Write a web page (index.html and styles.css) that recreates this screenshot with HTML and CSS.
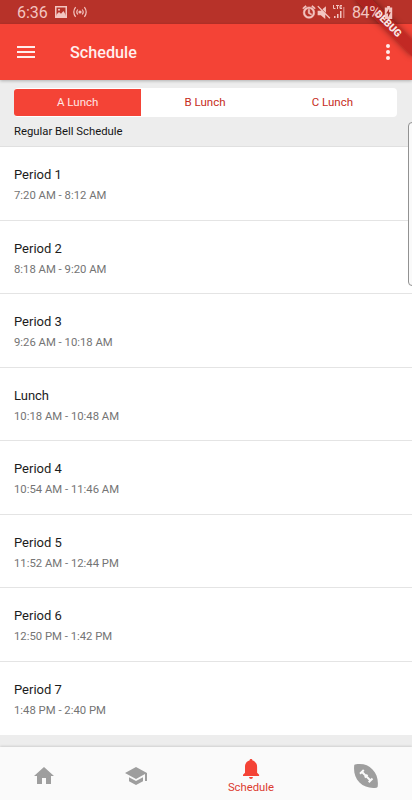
FILE: index.html
```html
<!DOCTYPE html>
<html lang="en">
<head>
    <meta charset="UTF-8" />
    <meta name="viewport" content="width=device-width, initial-scale=1" />
    <title>Schedule</title>
    <link rel="stylesheet" href="styles.css">
</head>
<body>

<div class="status-bar">
    <span class="clock">6:36</span>
    <svg class="icon-image" width="14" height="14" viewBox="0 0 14 14"><path fill-rule="evenodd" d="M1 1h12v12H1zM2.5 2.5v8h9v-8z"/><path d="M2.5 9.5 5 7l2 1.8L9.5 6l2 3.5v1.5h-9z"/><circle cx="5" cy="4.8" r="1"/></svg>
    <svg class="icon-cast" width="14" height="12" viewBox="0 0 14 12" fill="none" stroke="#f3c5c1" stroke-width="1.2"><circle cx="7" cy="6" r="1" fill="#f3c5c1"/><path d="M4.8 3.5q-2 2.5 0 5M9.2 3.5q2 2.5 0 5M2.6 1.2q-3.6 4.8 0 9.6M11.4 1.2q3.6 4.8 0 9.6"/></svg>
    <div class="status-right">
        <svg width="14" height="14" viewBox="1 1 22 22" stroke="#f3c5c1" stroke-width=".8"><path fill-rule="evenodd" d="M22 5.7l-4.6-3.9-1.3 1.5 4.6 3.9zM7.9 3.4 6.6 1.9 2 5.7l1.3 1.5zM12 4a9 9 0 1 0 0 18 9 9 0 0 0 0-18zm0 15.5a6.5 6.5 0 1 1 0-13 6.5 6.5 0 0 1 0 13z"/><path d="M13 8h-2.200v6l4.500 2.700 1-1.700-3.300-2z"/></svg>
        <svg width="14" height="14" viewBox="1 0 22 22"><path d="M3 1 1.500 2.500 8 9H2v7h5l7 6v-7l6.500 6.500L22 20zM15 2 9.500 6.500 15 12z"/></svg>
        <svg width="14" height="16" viewBox="0 0 14 16"><path fill="none" stroke="#f3c5c1" d="M1.500 1v3.500h2M4 1.500h3M5.500 1.500V5M10 1.500H8v3h2M8 3h2"/><path d="M2 12h1.500v2H2zM5 10h1.500v4H5zM8 7h1.500v7H8z"/><path opacity=".5" d="M11 3h1.500v11H11z"/></svg>
        <span class="battery-level">84%</span>
        <svg width="9" height="13" viewBox="0 0 9 14"><path fill-rule="evenodd" d="M3 0h3v1.500h2.500V14h-8V1.500H3zM5.200 3 2 8h2v4l3-5.200H5z"/></svg>
    </div>
</div>

<header class="app-bar">
    <svg class="menu-icon" width="18" height="14" viewBox="0 0 18 14"><path d="M0 1h18v2H0zM0 6h18v2H0zM0 11h18v2H0z"/></svg>
    <h1>Schedule</h1>
    <svg class="more-icon" width="4" height="16" viewBox="0 0 4 16"><circle cx="2" cy="2" r="2"/><circle cx="2" cy="8" r="2"/><circle cx="2" cy="14" r="2"/></svg>
</header>

<div class="lunch-header">
    <div class="tabs">
        <div class="tab active">A Lunch</div>
        <div class="tab">B Lunch</div>
        <div class="tab">C Lunch</div>
    </div>
    <p>Regular Bell Schedule</p>
</div>

<main class="periods">
    <div class="period"><h2>Period 1</h2><p>7:20 AM - 8:12 AM</p></div>
    <div class="period"><h2>Period 2</h2><p>8:18 AM - 9:20 AM</p></div>
    <div class="period"><h2>Period 3</h2><p>9:26 AM - 10:18 AM</p></div>
    <div class="period"><h2>Lunch</h2><p>10:18 AM - 10:48 AM</p></div>
    <div class="period"><h2>Period 4</h2><p>10:54 AM - 11:46 AM</p></div>
    <div class="period"><h2>Period 5</h2><p>11:52 AM - 12:44 PM</p></div>
    <div class="period"><h2>Period 6</h2><p>12:50 PM - 1:42 PM</p></div>
    <div class="period"><h2>Period 7</h2><p>1:48 PM - 2:40 PM</p></div>
</main>

<nav class="bottom-nav">
    <div class="nav-item home">
        <svg width="24" height="24" viewBox="0 0 24 24"><path d="M10 20v-6h4v6h5v-8h3L12 3 2 12h3v8z"/></svg>
    </div>
    <div class="nav-item">
        <svg width="24" height="24" viewBox="0 0 24 24"><path d="M5 13.180v4L12 21l7-3.820v-4L12 17zM12 3 1 9l11 6 9-4.910V17h2V9z"/></svg>
    </div>
    <div class="nav-item active">
        <svg width="18" height="20" viewBox="0 0 18 20"><path d="M9 0c1 0 1.500.7 1.500 1.600 2.900.7 4.600 3.100 4.600 6.100v6l2 2V17H1v-1.300l2-2v-6c0-3 1.600-5.400 4.500-6.100C7.500.7 8 0 9 0zM7 18h4q-.3 2-2 2t-2-2z"/></svg>
        <span>Schedule</span>
    </div>
    <div class="nav-item">
        <svg width="24" height="24" viewBox="0 0 24 24"><path d="M1 .5C8-.8 14 .5 18.500 5.500 23 10 24.500 16 23.700 22.500Q23.600 23.500 22.500 23.700C16 24.500 10 23 5.500 18.500 1 14-.5 8 .2 1.500Q.3.600 1 .5z"/><path class="laces" d="M8 8l8.500 8.500M6 9.800 9.800 6M14.700 18.300l3.800-3.800M10.800 13.500l2.700-2.700"/></svg>
    </div>
</nav>

<!-- edge panel handle -->
<div class="edge-handle"></div>

<div class="debug-corner">
    <div class="debug-banner">DEBUG</div>
</div>

</body>
</html>
```

FILE: styles.css
```css
* {
    box-sizing: border-box;
}
body {
    position: relative;
    display: flex;
    flex-direction: column;
    width: 412px;
    height: 800px;
    margin: 0;
    overflow: hidden;
    background-color: #ededed;
    font-family: Roboto, sans-serif;
}
h1, h2, p {
    margin: 0;
    font-weight: 400;
}
svg {
    display: block;
    flex-shrink: 0;
}
.status-bar {
    display: flex;
    align-items: center;
    height: 24px;
    padding: 0 19px 0 17px;
    background-color: #b73229;
    color: #f3c5c1;
    fill: #f3c5c1;
    font-size: 16px;
    line-height: 24px;
}
.clock {
    width: 37px;
    padding-top: 2px;
}
.icon-cast {
    margin-left: 5px;
}
/* system icons stay above the debug banner */
.status-right {
    display: flex;
    align-items: center;
    margin-left: auto;
    gap: 1px;
    z-index: 3;
}
.battery-level {
    width: 31px;
    margin-left: 5px;
    padding-top: 2px;
    letter-spacing: -0.4px;
}
.app-bar {
    display: flex;
    align-items: center;
    height: 56px;
    padding: 0 22px 0 17px;
    background-color: #f44336;
    color: #ffeeed;
    fill: #ffeeed;
    box-shadow: 0 1px 3px rgba(0,0,0,0.25);
    z-index: 1;
}
.app-bar h1 {
    margin-left: 35px;
    font-size: 16.2px;
    font-weight: 500;
}
.more-icon {
    margin-left: auto;
}
.lunch-header {
    height: 67px;
    padding: 8px 15px 0 14px;
    border-bottom: 1px solid #e0e0e0;
}
.tabs {
    display: flex;
    height: 29px;
    padding: 1px 1px 1px 0;
    background-color: white;
    border-radius: 4px;
}
.tab {
    flex: 1;
    color: #c62c22;
    font-size: 11.5px;
    line-height: 27px;
    text-align: center;
}
.tab.active {
    background-color: #f44336;
    border-radius: 3px 0 0 3px;
    color: #ffe6e4;
}
.lunch-header p {
    margin-top: 7px;
    color: #151515;
    font-size: 11.3px;
    line-height: 16px;
}
.period {
    height: 73.5px;
    padding: 19px 14px 0;
    background-color: white;
    border-bottom: 1px solid #e4e4e4;
}
.period:last-child {
    border-bottom: none;
}
.period h2 {
    color: #1c1c1c;
    font-size: 13px;
    line-height: 18px;
}
.period p {
    margin-top: 4px;
    color: #747474;
    font-size: 11.3px;
    line-height: 16px;
}
.bottom-nav {
    display: flex;
    height: 53px;
    margin-top: auto;
    background-color: #fafafa;
    box-shadow: 0 -1px 2px rgba(0,0,0,0.12);
    fill: #9e9e9e;
}
.nav-item {
    display: flex;
    flex-direction: column;
    align-items: center;
    justify-content: center;
    width: 92px;
    padding-top: 4px;
}
.nav-item.home {
    width: 90px;
    padding-right: 2px;
}
.nav-item.active {
    width: 138px;
    justify-content: flex-start;
    padding-top: 12px;
    color: #dc3b30;
    fill: #f44336;
    font-size: 11.3px;
    line-height: 17px;
}
.laces {
    fill: none;
    stroke: #fafafa;
    stroke-width: 2;
}
.edge-handle {
    position: absolute;
    top: 122px;
    right: -4px;
    width: 8px;
    height: 164px;
    background-color: #fafafa;
    border: 1px solid #929292;
    border-radius: 4px;
}
.debug-corner {
    position: absolute;
    top: 0;
    right: 0;
    z-index: 2;
    width: 80px;
    height: 80px;
    overflow: hidden;
}
.debug-banner {
    position: absolute;
    top: 18px;
    right: -16px;
    width: 80px;
    height: 12px;
    background-color: rgba(168,28,28,0.65);
    box-shadow: 0 0 6px rgba(0,0,0,0.42);
    color: #f7e6e6;
    font-size: 10.2px;
    font-weight: 900;
    line-height: 12px;
    text-align: center;
    transform: rotate(45deg);
}
```
